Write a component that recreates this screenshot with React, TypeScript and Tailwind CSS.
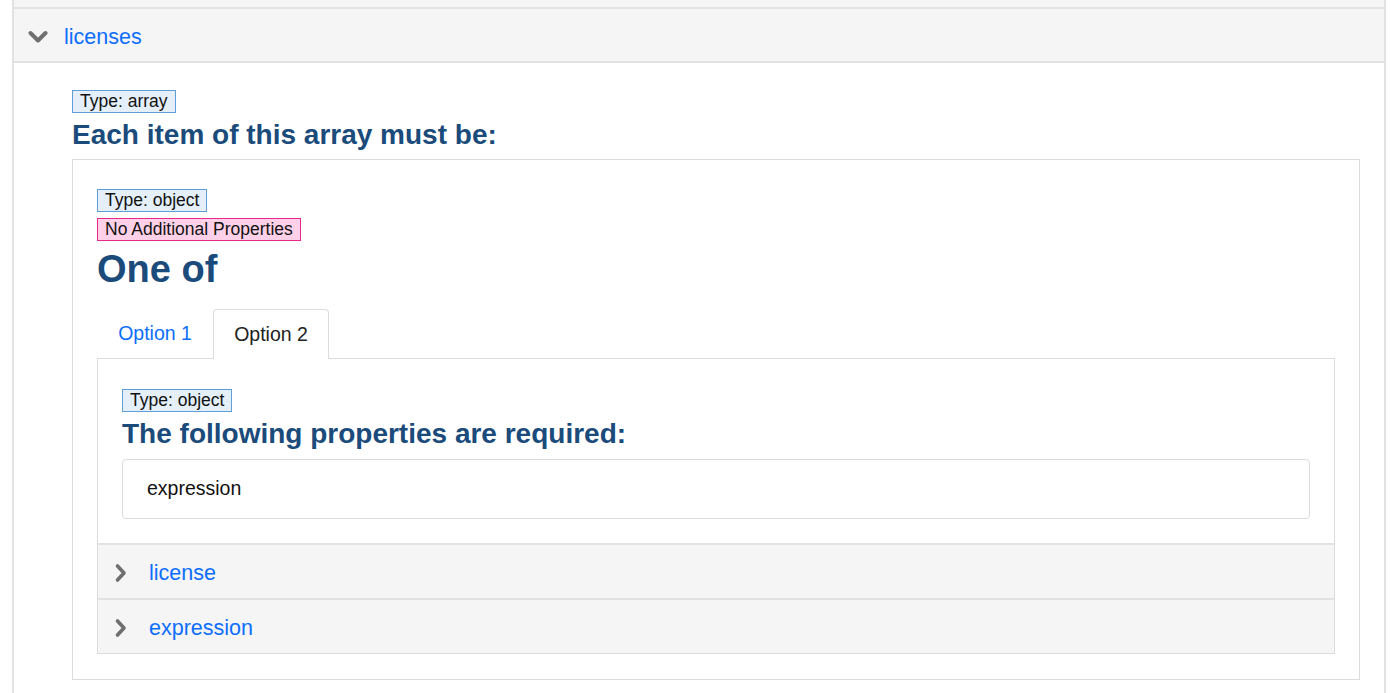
import React from "react"

const font = { fontFamily: '"Liberation Sans", Arial, sans-serif' }

function ChevronDown() {
  return (
    <svg width="20" height="14" viewBox="0 0 20 14" className="shrink-0">
      <polyline points="2.5,3 10,10.5 17.5,3" fill="none" stroke="#6f6f6f" strokeWidth="4" strokeLinecap="round" strokeLinejoin="round" />
    </svg>
  )
}

function ChevronRight() {
  return (
    <svg width="14" height="20" viewBox="0 0 14 20" className="shrink-0">
      <polyline points="3.5,3 10,10 3.5,17" fill="none" stroke="#6f6f6f" strokeWidth="3.6" strokeLinecap="round" strokeLinejoin="round" />
    </svg>
  )
}

function TypeBadge({ label }: { label: string }) {
  return (
    <div className="inline-flex h-[23px] items-center border border-[#5f9fd8] bg-[#e4eff9] px-[7px] text-[17.5px] leading-none text-[#111]">
      {label}
    </div>
  )
}

function PropRow({ name }: { name: string }) {
  return (
    <div className="flex h-[55px] items-center gap-[21px] border-t-2 border-[#e2e2e2] bg-[#f5f5f5] pl-[16px] pt-[3px]">
      <ChevronRight />
      <span className="text-[21.5px] text-[#0d6efd]">{name}</span>
    </div>
  )
}

export default function App() {
  return (
    <div className="h-[693px] w-[1400px] overflow-hidden bg-white" style={font}>
      <div className="ml-[12px] w-[1374px] border-x-2 border-[#e2e2e2]">
        <div className="h-[7px] bg-[#f5f5f5]" />
        <div className="flex h-[56px] items-center gap-[16px] border-y-2 border-[#e2e2e2] bg-[#f5f5f5] pl-[14px] pt-[4px]">
          <ChevronDown />
          <span className="text-[21.5px] text-[#0d6efd]">licenses</span>
        </div>

        <div className="pl-[58px] pr-[24px] pt-[27px] pb-[20px]">
          <TypeBadge label="Type: array" />
          <h3 className="mt-[5px] text-[28px] font-bold leading-[32px] text-[#1a4b7b]">Each item of this array must be:</h3>

          <div className="mt-[8px] border border-[#dcdcdc] px-[24px] pt-[29px] pb-[25px]">
            <div className="flex flex-col items-start gap-[6px]">
              <TypeBadge label="Type: object" />
              <div className="inline-flex h-[23px] items-center border border-[#e8288e] bg-[#ffd1e8] px-[7px] text-[17.5px] leading-none text-[#111]">
                No Additional Properties
              </div>
            </div>
            <h2 className="mt-[4px] text-[38px] font-bold leading-[48px] text-[#1a4b7b]">One of</h2>

            <div className="mt-[15px] flex h-[50px] items-end">
              <div className="flex h-[49px] w-[116px] items-center justify-center text-[19.5px] text-[#0d6efd]">Option 1</div>
              <div className="relative -mb-px flex h-[50px] w-[116px] items-center justify-center rounded-t-[4px] border border-b-0 border-[#dcdcdc] bg-white text-[19.5px] text-[#222]">
                Option 2
              </div>
            </div>

            <div className="border border-[#dcdcdc]">
              <div className="px-[24px] pt-[30px] pb-[24px]">
                <TypeBadge label="Type: object" />
                <h3 className="mt-[5px] text-[28px] font-bold leading-[32px] text-[#1a4b7b]">The following properties are required:</h3>
                <div className="mt-[9px] flex h-[60px] items-center rounded-[4px] border border-[#dcdcdc] pl-[24px] text-[19.5px] text-[#111]">
                  expression
                </div>
              </div>
              <PropRow name="license" />
              <PropRow name="expression" />
            </div>
          </div>
        </div>
      </div>
    </div>
  )
}
